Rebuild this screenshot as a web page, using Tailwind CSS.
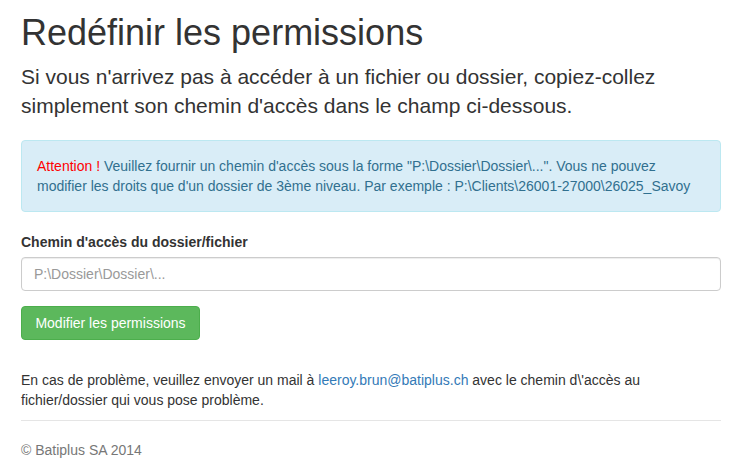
<!DOCTYPE html>
<html lang="fr">
<head>
<meta charset="utf-8">
<meta name="viewport" content="width=device-width, initial-scale=1">
<title>Redéfinir les permissions</title>
<script src="https://cdn.jsdelivr.net/npm/@tailwindcss/browser@4"></script>
</head>
<body class="bg-white pt-[13px] pr-[26px] pl-[21px] font-['Liberation_Sans',Arial,sans-serif] text-[14px] leading-5 text-[#333]">
<main>
<h1 class="mb-[9px] text-[36px] leading-10 font-normal">Redéfinir les permissions</h1>
<p class="mb-5 text-[21px] leading-[29px]">Si vous n'arrivez pas à accéder à un fichier ou dossier, copiez-collez simplement son chemin d'accès dans le champ ci-dessous.</p>
<div role="alert" class="mb-5 rounded border border-[#bce8f1] bg-[#d9edf7] p-[15px] text-[#31708f]"><span class="text-[#ff0000]">Attention !</span> Veuillez fournir un chemin d'accès sous la forme "P:\Dossier\Dossier\...". Vous ne pouvez modifier les droits que d'un dossier de 3ème niveau. Par exemple : P:\Clients\26001-27000\26025_Savoy</div>
<form>
<label for="path" class="mb-[5px] block font-bold">Chemin d'accès du dossier/fichier</label>
<input id="path" type="text" placeholder="P:\Dossier\Dossier\..." class="mb-[15px] block h-[34px] w-full rounded border border-[#ccc] bg-white px-3 py-1.5 text-[14px] text-[#555] shadow-[inset_0_1px_1px_rgba(0,0,0,0.075)] placeholder:text-[#999]">
<button type="submit" class="h-[34px] min-w-[179px] rounded border border-[#4cae4c] bg-[#5cb85c] px-3 text-white">Modifier les permissions</button>
</form>
<p class="mt-[30px]">En cas de problème, veuillez envoyer un mail à <a href="mailto:leeroy.brun@batiplus.ch" class="text-[#337ab7]">leeroy.brun@batiplus.ch</a> avec le chemin d\'accès au fichier/dossier qui vous pose problème.</p>
</main>
<footer class="mt-2.5 border-t border-[#e5e5e5] pt-[19px] text-[#777]">© Batiplus SA 2014</footer>
</body>
</html>
